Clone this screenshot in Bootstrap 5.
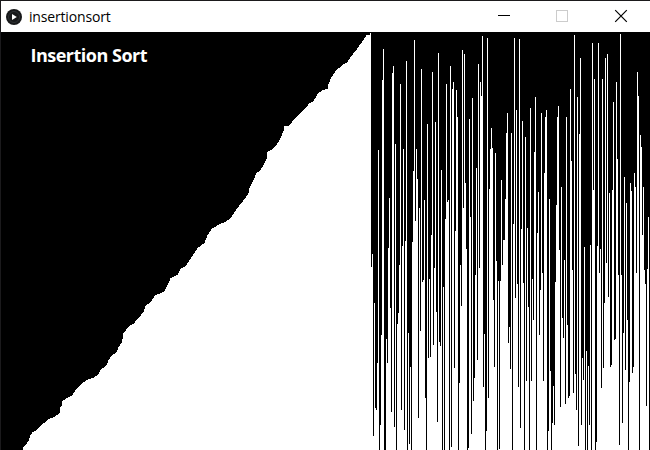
<!DOCTYPE html>
<html lang="en">
<head>
<meta charset="utf-8">
<title>insertionsort</title>
<link href="https://cdn.jsdelivr.net/npm/bootstrap@5.3.0/dist/css/bootstrap.min.css" rel="stylesheet">
<style>
body{font-family:"Open Sans","Noto Sans",sans-serif;background:#000}
.app-window{width:650px;height:450px;border-top:1px solid #1b1a1c;border-left:1px solid #1b1a1c}
.title-bar{height:31px;padding-left:5px;color:#000}
.app-name{font-size:14px;line-height:20px;margin-left:7px;letter-spacing:-.17px}
.win-btn{width:59px;height:31px}
.sketch{height:418px;background:#000}
.bar{width:1px;flex:0 0 1px;background:#fff}
.caption-text{left:29.5px;top:12px;font-size:18px;line-height:22px;font-weight:700;color:#fff;letter-spacing:-.5px;white-space:nowrap}
</style>
<script src="https://cdn.jsdelivr.net/npm/bootstrap@5.3.0/dist/js/bootstrap.bundle.min.js"></script>
</head>
<body class="m-0 overflow-hidden">
<div class="app-window d-flex flex-column overflow-hidden">
  <header class="title-bar bg-white d-flex align-items-center flex-shrink-0">
    <svg width="16" height="16" viewBox="0 0 16 16"><circle cx="8" cy="8" r="8" fill="#17181a"/><circle cx="8" cy="8" r="5.5" fill="none" stroke="#34373a" stroke-width=".8"/><path d="M6 5v6l4.8-3z" fill="#fff"/></svg>
    <span class="app-name">insertionsort</span>
    <div class="d-flex ms-auto">
      <svg class="win-btn" viewBox="0 0 59 31" shape-rendering="crispEdges"><path d="M25 14h12v1H25z" fill="#000"/></svg>
      <svg class="win-btn" viewBox="0 0 59 31" shape-rendering="crispEdges"><path d="M24.5 9.5h11v11h-11z" fill="none" stroke="#ccc"/></svg>
      <svg class="win-btn" viewBox="0 0 59 31"><path d="M24.2 9.2l11.6 11.6M35.8 9.2L24.2 20.8" stroke="#000" stroke-width="1.2"/></svg>
    </div>
  </header>
  <main class="sketch position-relative">
    <div id="bars" class="d-flex align-items-end h-100"></div>
    <div class="caption-text position-absolute">Insertion Sort</div>
  </main>
</div>
<script>
// Outline of the sorted run: column, top edge
const sorted = [[23,447],[25,445],[28,441],[30,435],[32,432],[36,430],[40,426],[48,419],[54,417],[59,413],[60,407],[61,406],[62,401],[68,397],[72,395],[75,390],[82,383],[88,379],[93,378],[98,374],[100,370],[106,365],[108,360],[111,356],[116,352],[118,347],[121,343],[122,339],[123,333],[128,327],[130,325],[133,324],[135,321],[137,319],[143,312],[145,306],[150,302],[155,295],[161,293],[164,291],[168,283],[170,278],[177,275],[180,269],[185,266],[190,259],[197,248],[204,243],[207,235],[211,229],[219,224],[225,222],[230,218],[234,212],[240,204],[245,198],[248,193],[249,188],[253,180],[256,173],[260,170],[264,163],[266,159],[267,152],[272,149],[276,145],[280,138],[283,131],[284,126],[288,126],[295,118],[300,113],[305,108],[309,103],[313,101],[317,94],[322,90],[327,89],[328,84],[331,77],[335,71],[342,65],[347,62],[350,57],[355,51],[360,44],[365,37],[366,35],[369,35],[370,33]];
// Top edge of every column still waiting to be sorted
const unsorted = [
267,254,436,303,408,410,363,150,450,425,335,80,49,450,450,339,363,248,198,308,412,73,66,427,144,450,324,313,265,84,410,246,149,430,241,61,450,333,444,367,450,242,171,40,221,149,179,418,208,331,69,282,280,200,398,450,124,358,279,357,235,72,345,268,122,312,422,53,342,346,170,450,287,450,219,84,202,200,450,66,447,89,82,368,231,90,117,450,383,
265,306,50,208,54,183,249,450,448,119,217,434,98,401,378,275,168,360,64,268,82,96,36,387,334,450,431,38,398,189,149,128,148,300,367,153,261,450,281,449,281,180,265,240,240,199,133,113,343,327,369,133,450,224,38,298,110,284,387,39,428,229,121,283,450,137,381,228,307,450,108,381,279,320,152,97,450,233,192,335,290,113,273,381,173,117,110,450,431,199,
371,450,423,386,425,282,205,117,106,250,407,187,318,338,260,404,117,325,398,396,89,161,270,393,35,374,410,97,446,134,58,425,358,380,247,450,351,450,366,425,245,450,43,190,79,450,442,246,43,273,249,388,79,368,303,58,263,54,297,193,367,365,190,102,340,339,82,159,275,445,34,275,423,333,177,370,203,320,450,382,183,191,373,367,173,187,273,72,96,450,135,147,235,187,270,284,406,269,217,450];
const tops = [];
for (let x = 1; x < 23; x++) tops.push(450);
for (let i = 0; i < sorted.length - 1; i++) {
  const [a, ya] = sorted[i], [b, yb] = sorted[i + 1];
  for (let x = a; x < b; x++) tops.push(Math.round(ya + (yb - ya) * (x - a) / (b - a)));
}
tops.push(33, ...unsorted);
const box = document.getElementById("bars");
for (const t of tops) {
  const bar = document.createElement("div");
  bar.className = "bar";
  bar.style.height = (450 - t) + "px";
  box.append(bar);
}
</script>
</body>
</html>
